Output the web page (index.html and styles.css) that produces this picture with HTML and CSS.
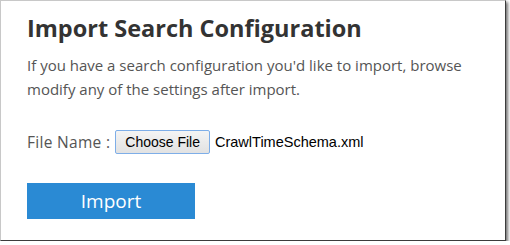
FILE: index.html
```html
<!DOCTYPE html>
<html lang="en">
<head>
	<meta charset="utf-8">
	<title>Import Search Configuration</title>
	<link rel="stylesheet" href="styles.css">
</head>
<body>
	<div class="frame">
		<h2 class="title">Import Search Configuration</h2>
		<p class="intro">If you have a search configuration you'd like to import, browse modify any of the settings after import.</p>
		<div class="file-row">
			<span class="file-label">File Name :</span>
			<button class="choose-file">Choose File</button>
			<span class="file-name">CrawlTimeSchema.xml</span>
		</div>
		<button class="import-button">Import</button>
	</div>
</body>
</html>
```

FILE: styles.css
```css
html, body { margin: 0; padding: 0; background: #fff; }

.frame {
  box-sizing: border-box;
  width: 506px;
  height: 241px;
  border-top: 1px solid #c8c8c8;
  border-left: 1px solid #c8c8c8;
  border-right: 1px solid #3c3c3c;
  border-bottom: 1px solid #3c3c3c;
  box-shadow: 2px 2px 3px rgba(0, 0, 0, 0.55);
  padding: 10px 0 0 26px;
  overflow: hidden;
  font-family: "Open Sans", "Noto Sans", sans-serif;
  color: #555;
}

.title {
  margin: 0;
  font-size: 23.5px;
  line-height: 34px;
  font-weight: 700;
  color: #333;
  white-space: nowrap;
}

.intro {
  margin: 8px 0 0;
  font-size: 15px;
  line-height: 24px;
  white-space: pre-line;
}

.file-row {
  display: flex;
  align-items: center;
  margin-top: 29px;
  height: 24px;
}

.file-label { font-size: 15.5px; letter-spacing: 0.3px; margin-right: 5px; }

.choose-file {
  height: 24px;
  padding: 0 9px;
  font-family: "Liberation Sans", Arial, sans-serif;
  font-size: 14px;
  color: #000;
  background: linear-gradient(#f4f4f4, #e2e2e2);
  border: 1px solid #7eaee8;
  border-radius: 2px;
}

.file-name {
  margin-left: 5px;
  font-family: "Liberation Sans", Arial, sans-serif;
  font-size: 14.5px;
  color: #000;
}

.import-button {
  display: block;
  margin-top: 29px;
  width: 168px;
  height: 36px;
  background: #2a8ad4;
  border: none;
  color: #fff;
  font-family: "Open Sans", "Noto Sans", sans-serif;
  font-size: 19px;
}
```
